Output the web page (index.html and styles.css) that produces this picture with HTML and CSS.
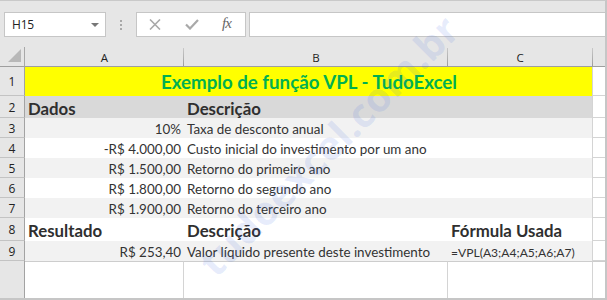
FILE: index.html
```html
<!DOCTYPE html>
<html lang="pt-BR">
<head>
<meta charset="utf-8">
<title>VPL - TudoExcel</title>
<link rel="stylesheet" href="styles.css">
</head>
<body>
<div class="window">
  <div class="formula-bar">
    <div class="name-box">
      <span class="name">H15</span>
      <span class="caret"></span>
    </div>
    <div class="grip"><i></i><i></i><i></i></div>
    <div class="fx-buttons">
      <svg class="btn-cancel" width="12" height="11" viewBox="0 0 12 11">
        <path d="M1 0.5 L11 10.5 M11 0.5 L1 10.5" stroke="#a9a9a9" stroke-width="1.6" fill="none"/>
      </svg>
      <svg class="btn-enter" width="14" height="11" viewBox="0 0 14 11">
        <path d="M1 5.5 L5 9.5 L13 1" stroke="#a9a9a9" stroke-width="2.2" fill="none"/>
      </svg>
      <span class="fx">fx</span>
    </div>
    <div class="formula-input"></div>
  </div>

  <div class="sheet">
    <div class="corner">
      <svg width="14" height="14" viewBox="0 0 14 14"><polygon points="13,0 13,13 0,13" fill="#b8b8b8"/></svg>
    </div>
    <div class="col-hdr line-r">A</div>
    <div class="col-hdr line-r">B</div>
    <div class="col-hdr">C</div>
    <div class="col-hdr line-l"></div>

    <div class="row-hdr">1</div>
    <div class="cell title">Exemplo de função VPL - TudoExcel</div>
    <div class="cell-d"></div>

    <div class="row-hdr">2</div>
    <div class="cell head band-dark">Dados</div>
    <div class="cell head band-dark">Descrição</div>
    <div class="cell band-dark"></div>
    <div class="cell-d"></div>

    <div class="row-hdr">3</div>
    <div class="cell num band">10%</div>
    <div class="cell band">Taxa de desconto anual</div>
    <div class="cell band"></div>
    <div class="cell-d"></div>

    <div class="row-hdr">4</div>
    <div class="cell num">-R$ 4.000,00</div>
    <div class="cell">Custo inicial do investimento por um ano</div>
    <div class="cell"></div>
    <div class="cell-d"></div>

    <div class="row-hdr">5</div>
    <div class="cell num band">R$ 1.500,00</div>
    <div class="cell band">Retorno do primeiro ano</div>
    <div class="cell band"></div>
    <div class="cell-d"></div>

    <div class="row-hdr">6</div>
    <div class="cell num">R$ 1.800,00</div>
    <div class="cell">Retorno do segundo ano</div>
    <div class="cell"></div>
    <div class="cell-d"></div>

    <div class="row-hdr">7</div>
    <div class="cell num band">R$ 1.900,00</div>
    <div class="cell band">Retorno do terceiro ano</div>
    <div class="cell band"></div>
    <div class="cell-d"></div>

    <div class="row-hdr">8</div>
    <div class="cell head">Resultado</div>
    <div class="cell head">Descrição</div>
    <div class="cell head">Fórmula Usada</div>
    <div class="cell-d"></div>

    <div class="row-hdr">9</div>
    <div class="cell num band">R$ 253,40</div>
    <div class="cell band">Valor líquido presente deste investimento</div>
    <div class="cell band formula">=VPL(A3;A4;A5;A6;A7)</div>
    <div class="cell-d"></div>

    <div class="row-hdr last"></div>
    <div class="empty grid-r"></div>
    <div class="empty grid-r"></div>
    <div class="empty"></div>
    <div class="empty cell-d"></div>
  </div>

  <div class="watermark">tudoexcel.com.br</div>
</div>
</body>
</html>
```

FILE: styles.css
```css
* {
  box-sizing: border-box;
}

html, body {
  margin: 0;
  padding: 0;
  background: #e6e6e6;
}

.window {
  position: relative;
  width: 607px;
  height: 300px;
  overflow: hidden;
  background: #e6e6e6;
  border-top: 1px solid #c9c9c9;
  border-right: 2px solid #c6c6c6;
  border-bottom: 2px solid #c6c6c6;
  display: flex;
  flex-direction: column;
  font-family: "Open Sans", "Noto Sans", sans-serif;
}

/* ---------- formula bar ---------- */
.formula-bar {
  height: 46px;
  flex: none;
  display: flex;
  align-items: flex-start;
  padding-top: 11px;
  padding-left: 4px;
}

.name-box {
  width: 102px;
  height: 25px;
  background: #fff;
  border: 1px solid #c6c6c6;
  display: flex;
  align-items: center;
  justify-content: space-between;
  padding: 0 6px 0 7px;
}

.name {
  font-size: 12px;
  color: #222;
  letter-spacing: -0.2px;
}

.caret {
  width: 0;
  height: 0;
  border-left: 4px solid transparent;
  border-right: 4px solid transparent;
  border-top: 4px solid #777;
}

.grip {
  width: 30px;
  height: 25px;
  display: flex;
  flex-direction: column;
  align-items: center;
  justify-content: center;
  gap: 2px;
}

.grip i {
  display: block;
  width: 2px;
  height: 2px;
  background: #a8a8a8;
}

.fx-buttons {
  width: 110px;
  height: 25px;
  background: #fff;
  border: 1px solid #c6c6c6;
  display: flex;
  align-items: center;
  padding-left: 12px;
}

.btn-cancel {
  margin-right: 24px;
}

.btn-enter {
  margin-right: 23px;
}

.fx {
  font-family: "Liberation Serif", "DejaVu Serif", serif;
  font-style: italic;
  font-size: 15px;
  color: #666;
  letter-spacing: -1px;
  margin-top: -2px;
}

.formula-input {
  flex: 1;
  height: 25px;
  margin-left: 3px;
  background: #fff;
  border: 1px solid #c6c6c6;
  border-right: none;
}

/* ---------- sheet grid ---------- */
.sheet {
  flex: 1;
  display: grid;
  grid-template-columns: 25px 159px 264px 144px 1fr;
  grid-template-rows: 20px 29px 22px 20px 20px 20px 20px 20px 23px 20px 1fr;
  background: #fff;
  font-family: "Lato", "Liberation Sans", sans-serif;
  font-size: 13.4px;
  color: #333;
}

.corner {
  background: #e6e6e6;
  border-right: 1px solid #a8a8a8;
  border-bottom: 1px solid #9f9f9f;
  display: flex;
  align-items: flex-end;
  justify-content: flex-end;
  padding: 0 2px 3px 0;
}

.corner svg {
  display: block;
}

.col-hdr {
  background-color: #e6e6e6;
  border-bottom: 1px solid #9f9f9f;
  font-family: "Open Sans", "Noto Sans", sans-serif;
  font-size: 11.5px;
  color: #222;
  display: flex;
  align-items: center;
  justify-content: center;
  padding-top: 1px;
}

.col-hdr.line-r {
  background-image: linear-gradient(to bottom, #e6e6e6 1px, #c9c9c9 1px, #9d9d9d);
  background-size: 1px 100%;
  background-position: right top;
  background-repeat: no-repeat;
}

.col-hdr.line-l {
  background-image: linear-gradient(to bottom, #e6e6e6 1px, #c9c9c9 1px, #9d9d9d);
  background-size: 1px 100%;
  background-position: left top;
  background-repeat: no-repeat;
}

.row-hdr {
  background: #e6e6e6;
  border-right: 1px solid #a3a3a3;
  border-bottom: 1px solid #c3c3c3;
  font-family: "Open Sans", "Noto Sans", sans-serif;
  font-size: 12px;
  color: #222;
  display: flex;
  align-items: center;
  justify-content: center;
  padding-top: 1px;
}

.row-hdr.last {
  border-bottom: none;
}

.cell {
  display: flex;
  align-items: center;
  padding: 2px 3px 0 3px;
  white-space: nowrap;
  overflow: visible;
  background: #fff;
}

.cell.num {
  justify-content: flex-end;
}

.band {
  background: #f2f2f2;
}

.band-dark {
  background: #d9d9d9;
}

.cell.head {
  font-weight: 700;
  font-size: 16.8px;
  color: #2f2f2f;
  padding-left: 3px;
}

.cell.title {
  grid-column: span 3;
  background: #ffff00;
  color: #00b050;
  font-weight: 700;
  font-size: 18.7px;
  justify-content: center;
  padding: 0 0 0 1px;
}

.cell.formula {
  font-size: 12.1px;
}

.cell-d {
  background: #fff;
  border-left: 1px solid #d4d4d4;
  border-bottom: 1px solid #d4d4d4;
}

.empty {
  background: #fff;
  border-top: 1px solid #cdcdcd;
}

.empty.grid-r {
  border-right: 1px solid #d4d4d4;
}

.empty.cell-d {
  border-bottom: none;
}

/* ---------- site watermark ---------- */
.watermark {
  position: absolute;
  left: 328px;
  top: 144px;
  transform: translate(-50%, -50%) rotate(-45deg);
  font-family: "Open Sans", "Noto Sans", sans-serif;
  font-weight: 700;
  font-size: 40px;
  color: rgba(70, 110, 225, 0.13);
  white-space: nowrap;
  pointer-events: none;
}
```
